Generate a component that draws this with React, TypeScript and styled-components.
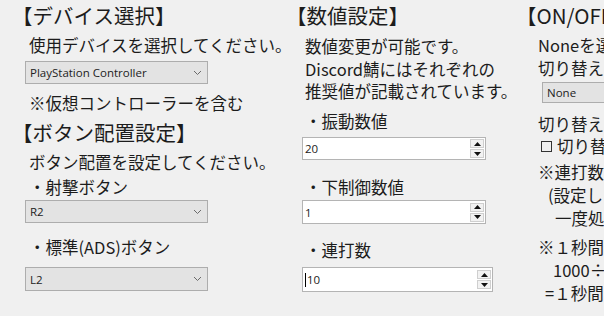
import styled, { createGlobalStyle } from "styled-components";

const GlobalStyle = createGlobalStyle`
    html, body {
        margin: 0;
        padding: 0;
        background: #f0f0f0;
    }
`;

const Page = styled.main`
    display: flex;
    box-sizing: border-box;
    width: 604px;
    height: 316px;
    overflow: hidden;
    padding-left: 12px;
    background: #f0f0f0;
    color: #1c1c1c;
    font-family: "Noto Sans CJK JP", "Noto Sans", sans-serif;
`;

const Column = styled.section<{ $width: number }>`
    flex: none;
    width: ${(p) => p.$width}px;
    display: flex;
    flex-direction: column;
    align-items: flex-start;
`;

const Heading = styled.h2<{ $top?: number }>`
    margin: ${(p) => p.$top ?? 0}px 0 0 0;
    font-size: 20.5px;
    font-weight: 400;
    line-height: 30px;
    white-space: nowrap;
`;

const Line = styled.p<{ $top?: number; $indent?: number; $lh?: number }>`
    margin: ${(p) => p.$top ?? 0}px 0 0 ${(p) => p.$indent ?? 0}px;
    font-size: 16.5px;
    line-height: ${(p) => p.$lh ?? 22}px;
    white-space: nowrap;
    display: flex;
    align-items: center;
`;

const Select = styled.div<{ $top: number; $indent: number; $width: number; $height?: number }>`
    flex: none;
    box-sizing: border-box;
    display: flex;
    align-items: center;
    justify-content: space-between;
    margin: ${(p) => p.$top}px 0 0 ${(p) => p.$indent}px;
    width: ${(p) => p.$width}px;
    height: ${(p) => p.$height ?? 23}px;
    padding: 0 5px 0 4px;
    border: 1px solid #adadad;
    background: #e3e3e3;
    font-family: "Open Sans", "Noto Sans", sans-serif;
    font-size: 11.5px;
    color: #222;
    white-space: nowrap;
`;

const NumberBox = styled.div<{ $top: number; $indent: number; $width: number; $height?: number }>`
    flex: none;
    box-sizing: border-box;
    display: flex;
    align-items: center;
    justify-content: space-between;
    margin: ${(p) => p.$top}px 0 0 ${(p) => p.$indent}px;
    width: ${(p) => p.$width}px;
    height: ${(p) => p.$height ?? 23}px;
    padding: 0 1px 0 2px;
    border: 1px solid #b4b4b4;
    background: #ffffff;
    font-family: "Open Sans", "Noto Sans", sans-serif;
    font-size: 11.5px;
    color: #222;
`;

const Value = styled.span`
    display: flex;
    align-items: center;
`;

const Caret = styled.span`
    display: inline-block;
    width: 1px;
    height: 14px;
    background: #000;
    margin-right: 1px;
`;

const Spinner = styled.span`
    display: flex;
    flex-direction: column;
    gap: 1px;
`;

const SpinButton = styled.span`
    box-sizing: border-box;
    display: flex;
    align-items: center;
    justify-content: center;
    width: 14px;
    height: 9px;
    border: 1px solid #cfcfcf;
    background: #f2f2f2;
`;

const CheckBox = styled.span`
    box-sizing: border-box;
    display: inline-block;
    width: 11px;
    height: 11px;
    border: 1px solid #333;
    margin-right: 5px;
`;

const Chevron = () => (
    <svg width="9" height="6" viewBox="0 0 9 6">
        <polyline points="1,1 4.5,4.5 8,1" fill="none" stroke="#6a6a6a" strokeWidth="1" />
    </svg>
);

const Arrow = ({ down }: { down?: boolean }) => (
    <svg width="7" height="4" viewBox="0 0 7 4">
        <polygon points={down ? "0,0 7,0 3.5,4" : "0,4 7,4 3.5,0"} fill="#111" />
    </svg>
);

const Spin = () => (
    <Spinner>
        <SpinButton>
            <Arrow />
        </SpinButton>
        <SpinButton>
            <Arrow down />
        </SpinButton>
    </Spinner>
);

const App = (): JSX.Element => {
    return (
        <Page>
            <GlobalStyle />

            <Column $width={274}>
                <Heading>【デバイス選択】</Heading>
                <Line $top={4} $indent={17}>使用デバイスを選択してください。</Line>
                <Select $top={5} $indent={13} $width={183}>
                    PlayStation Controller
                    <Chevron />
                </Select>
                <Line $top={8} $indent={17}>※仮想コントローラーを含む</Line>
                <Heading $top={3}>【ボタン配置設定】</Heading>
                <Line $top={4} $indent={17}>ボタン配置を設定してください。</Line>
                <Line $top={3} $indent={17}>・射撃ボタン</Line>
                <Select $top={2} $indent={13} $width={183}>
                    R2
                    <Chevron />
                </Select>
                <Line $top={13} $indent={17}>・標準(ADS)ボタン</Line>
                <Select $top={9} $indent={13} $width={183} $height={24}>
                    L2
                    <Chevron />
                </Select>
            </Column>

            <Column $width={230}>
                <Heading>【数値設定】</Heading>
                <Line $top={5} $indent={19} $lh={22.5}>数値変更が可能です。</Line>
                <Line $indent={19} $lh={22.5}>Discord鯖にはそれぞれの</Line>
                <Line $indent={19} $lh={22.5}>推奨値が記載されています。</Line>
                <Line $top={7.5} $indent={19}>・振動数値</Line>
                <NumberBox $top={5} $indent={16} $width={184}>
                    <Value>20</Value>
                    <Spin />
                </NumberBox>
                <Line $top={16} $indent={19}>・下制御数値</Line>
                <NumberBox $top={2} $indent={16} $width={184} $height={24}>
                    <Value>1</Value>
                    <Spin />
                </NumberBox>
                <Line $top={15} $indent={19}>・連打数</Line>
                <NumberBox $top={6} $indent={16} $width={191} $height={25}>
                    <Value>
                        <Caret />
                        10
                    </Value>
                    <Spin />
                </NumberBox>
            </Column>

            <Column $width={300}>
                <Heading>【ON/OFF切り替え】</Heading>
                <Line $top={4} $indent={22} $lh={23}>Noneを選択すると常時有効になります。</Line>
                <Line $indent={22} $lh={23}>切り替えキーを選択してください。</Line>
                <Select $top={2} $indent={26} $width={183} $height={21}>
                    None
                    <Chevron />
                </Select>
                <Line $top={10} $indent={22}>切り替え時の通知</Line>
                <Line $indent={25}>
                    <CheckBox />
                    切り替え音を鳴らす
                </Line>
                <Line $top={4} $indent={22} $lh={23}>※連打数は次の式で計算されます</Line>
                <Line $indent={32} $lh={23}>(設定した数値の間隔で</Line>
                <Line $indent={39} $lh={23}>一度処理を行います)</Line>
                <Line $top={6} $indent={22} $lh={23}>※１秒間の連打数の計算</Line>
                <Line $indent={37} $lh={23}>1000÷連打数</Line>
                <Line $indent={29} $lh={23}>=１秒間の処理回数</Line>
            </Column>
        </Page>
    );
};

export default App;
